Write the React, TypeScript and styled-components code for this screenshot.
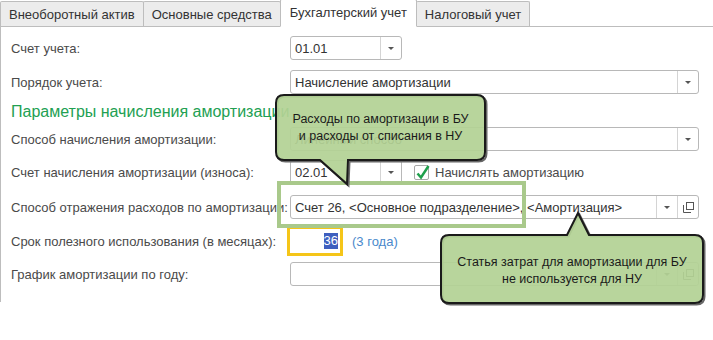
import React from "react";
import styled, { createGlobalStyle } from "styled-components";

const Global = createGlobalStyle`
  html, body { margin: 0; padding: 0; background: #fff; }
  body { font-family: "Liberation Sans", Arial, sans-serif; font-size: 13px; color: #333; }
`;

const Page = styled.div`
  position: relative;
  width: 713px;
  height: 340px;
  overflow: hidden;
`;

const TabBar = styled.div`
  display: flex;
  align-items: flex-end;
  height: 27px;
  box-sizing: border-box;
  border-bottom: 1px solid #bdbdbd;
`;

const Tab = styled.div<{ $active?: boolean }>`
  box-sizing: border-box;
  height: ${(p) => (p.$active ? "28px" : "25px")};
  margin-bottom: ${(p) => (p.$active ? "-1px" : "0")};
  margin-left: -1px;
  &:first-child { margin-left: 0; }
  padding: 0 ${(p) => (p.$active ? "9px" : "8px")};
  display: flex;
  align-items: center;
  padding-bottom: ${(p) => (p.$active ? "2px" : "0")};
  background: ${(p) => (p.$active ? "#fff" : "#ececec")};
  border: 1px solid #bdbdbd;
  border-bottom: ${(p) => (p.$active ? "1px solid #fff" : "none")};
  border-radius: 2px 2px 0 0;
  color: #333;
  white-space: nowrap;
`;

const Panel = styled.div`
  border-left: 1px solid #bdbdbd;
  height: 275px;
  box-sizing: border-box;
  padding: 9px 0 0 10px;
  display: flex;
  flex-direction: column;
`;

const Row = styled.div<{ $mt?: number }>`
  display: grid;
  grid-template-columns: 279px 1fr;
  align-items: center;
  height: 24px;
  margin-top: ${(p) => p.$mt ?? 0}px;
`;

const Label = styled.div`
  color: #4a4a4a;
  white-space: nowrap;
`;

const Heading = styled.div<{ $mt?: number }>`
  margin-top: ${(p) => p.$mt ?? 0}px;
  height: 24px;
  line-height: 24px;
  font-size: 16px;
  color: #22a052;
  white-space: nowrap;
`;

const Field = styled.div<{ $w: number }>`
  box-sizing: border-box;
  width: ${(p) => p.$w}px;
  height: 24px;
  border: 1px solid #b8b8b8;
  border-radius: 3px;
  display: flex;
  align-items: stretch;
  background: #fff;
`;

const Value = styled.div`
  flex: 1;
  padding-left: 4px;
  display: flex;
  align-items: center;
  color: #333;
  white-space: nowrap;
  overflow: hidden;
`;

const FieldButton = styled.div`
  width: 20px;
  border-left: 1px solid #d4d4d4;
  display: flex;
  align-items: center;
  justify-content: center;
`;

const Arrow = styled.div`
  width: 0;
  height: 0;
  border-left: 3px solid transparent;
  border-right: 3px solid transparent;
  border-top: 3px solid #555;
`;

const Inline = styled.div`
  display: flex;
  align-items: center;
`;

const CheckWrap = styled.div`
  position: relative;
  margin-left: 12px;
  width: 15px;
  height: 15px;
  box-sizing: border-box;
  border: 1px solid #a8a8a8;
  border-radius: 2px;
  background: #fff;
`;

const CheckMark = styled.svg`
  position: absolute;
  left: 0px;
  top: -3px;
`;

const CheckLabel = styled.span`
  margin-left: 6px;
  color: #4a4a4a;
`;

const NumField = styled.div`
  box-sizing: border-box;
  width: 50px;
  height: 24px;
  outline: 3px solid #f5c518;
  display: flex;
  align-items: center;
  justify-content: flex-end;
  padding-right: 2px;
`;

const Selected = styled.span`
  background: #3e5fbf;
  color: #fff;
  padding: 1px 0;
  line-height: 14px;
`;

const Link = styled.span`
  margin-left: 12px;
  color: #4a89cc;
`;

const Highlight = styled.div`
  position: absolute;
  left: 277px;
  top: 181px;
  width: 249px;
  height: 47px;
  box-sizing: border-box;
  border: 4px solid #a9c98b;
`;

const Callout = styled.div<{ $x: number; $y: number; $w: number; $h: number }>`
  position: absolute;
  left: ${(p) => p.$x}px;
  top: ${(p) => p.$y}px;
  width: ${(p) => p.$w}px;
  height: ${(p) => p.$h}px;
`;

const CalloutShape = styled.svg`
  position: absolute;
  left: 0;
  top: 0;
  overflow: visible;
`;

const CalloutText = styled.div<{ $x: number; $y: number; $w: number }>`
  position: absolute;
  left: ${(p) => p.$x}px;
  top: ${(p) => p.$y}px;
  width: ${(p) => p.$w}px;
  text-align: center;
  font-size: 12.5px;
  line-height: 17px;
  color: #1a1a1a;
`;

const OpenIcon = () => (
  <svg width="11" height="11" viewBox="0 0 11 11">
    <rect x="3.5" y="0.5" width="7" height="7" fill="none" stroke="#555" strokeWidth="1" />
    <path d="M0.5 3 V10.5 H8" fill="none" stroke="#555" strokeWidth="1" />
  </svg>
);

const Dropdown = () => (
  <FieldButton>
    <Arrow />
  </FieldButton>
);

const OpenButton = () => (
  <FieldButton>
    <OpenIcon />
  </FieldButton>
);

const c1 =
  "M10 2 H203 Q211 2 211 10 V59 Q211 67 203 67 H74 L73 91 L46 67 H10 Q2 67 2 59 V10 Q2 2 10 2 Z";
const c2 =
  "M10 24 H128 L139 2 L150 24 H256 Q264 24 264 32 V84 Q264 92 256 92 H10 Q2 92 2 84 V32 Q2 24 10 24 Z";

export default function App() {
  return (
    <Page>
      <Global />
      <TabBar>
        <Tab>Внеоборотный актив</Tab>
        <Tab>Основные средства</Tab>
        <Tab $active>Бухгалтерский учет</Tab>
        <Tab>Налоговый учет</Tab>
      </TabBar>
      <Panel>
        <Row>
          <Label>Счет учета:</Label>
          <Field $w={112}>
            <Value>01.01</Value>
            <Dropdown />
          </Field>
        </Row>
        <Row $mt={10}>
          <Label>Порядок учета:</Label>
          <Field $w={409}>
            <Value>Начисление амортизации</Value>
            <Dropdown />
          </Field>
        </Row>
        <Heading $mt={6}>Параметры начисления амортизации</Heading>
        <Row $mt={3}>
          <Label>Способ начисления амортизации:</Label>
          <Field $w={409}>
            <Value>Линейный способ</Value>
            <Dropdown />
          </Field>
        </Row>
        <Row $mt={9}>
          <Label>Счет начисления амортизации (износа):</Label>
          <Inline>
            <Field $w={112}>
              <Value>02.01</Value>
              <Dropdown />
            </Field>
            <CheckWrap>
              <CheckMark width="16" height="18" viewBox="0 0 16 18">
                <path d="M2.5 10.5 L6 14.5 L13.5 3" fill="none" stroke="#1fa04c" strokeWidth="2.5" />
              </CheckMark>
            </CheckWrap>
            <CheckLabel>Начислять амортизацию</CheckLabel>
          </Inline>
        </Row>
        <Row $mt={11}>
          <Label>Способ отражения расходов по амортизации:</Label>
          <Field $w={409}>
            <Value>Счет 26, &lt;Основное подразделение&gt;, &lt;Амортизация&gt;</Value>
            <Dropdown />
            <OpenButton />
          </Field>
        </Row>
        <Row $mt={10}>
          <Label>Срок полезного использования (в месяцах):</Label>
          <Inline>
            <NumField>
              <Selected>36</Selected>
            </NumField>
            <Link>(3 года)</Link>
          </Inline>
        </Row>
        <Row $mt={9}>
          <Label>График амортизации по году:</Label>
          <Field $w={409}>
            <Value />
            <Dropdown />
            <OpenButton />
          </Field>
        </Row>
      </Panel>

      <Highlight />

      <Callout $x={274} $y={93} $w={215} $h={94}>
        <CalloutShape width="215" height="94">
          <path d={c1} fill="none" stroke="#666" strokeWidth="2" transform="translate(1.5 1.5)" />
          <path d={c1} fill="#b3d295" fillOpacity="0.93" stroke="#1a1a1a" strokeWidth="2" />
        </CalloutShape>
        <CalloutText $x={2} $y={18} $w={209}>
          Расходы по амортизации в БУ
          <br />и расходы от списания в НУ
        </CalloutText>
      </Callout>

      <Callout $x={439} $y={211} $w={268} $h={96}>
        <CalloutShape width="268" height="96">
          <path d={c2} fill="none" stroke="#666" strokeWidth="2" transform="translate(1.5 1.5)" />
          <path d={c2} fill="#b3d295" fillOpacity="0.93" stroke="#1a1a1a" strokeWidth="2" />
        </CalloutShape>
        <CalloutText $x={2} $y={43} $w={262}>
          Статья затрат для амортизации для БУ
          <br />
          не используется для НУ
        </CalloutText>
      </Callout>
    </Page>
  );
}
